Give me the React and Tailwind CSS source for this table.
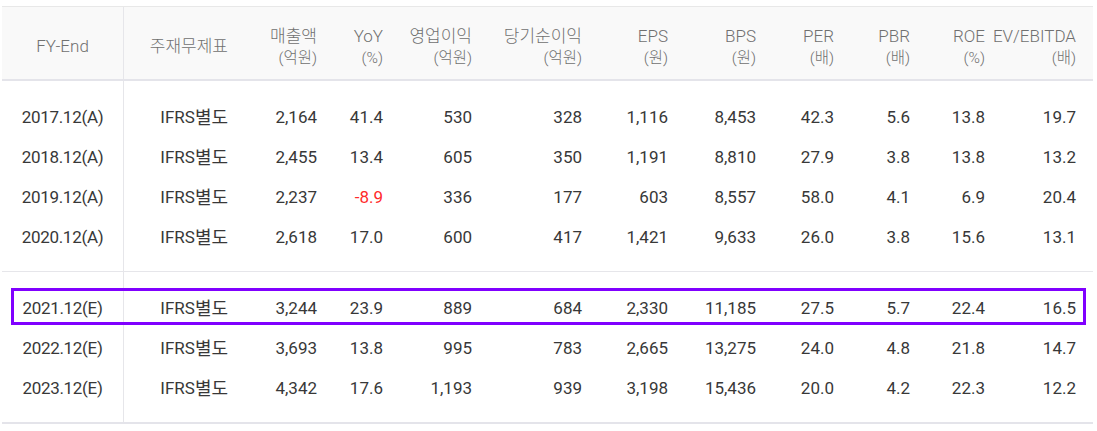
import React from "react";

const COLS =
  "grid grid-cols-[122px_121px_89px_66px_89px_110px_86px_88px_78px_76px_75px_91px]";

const headers = [
  ["매출액", "(억원)"],
  ["YoY", "(%)"],
  ["영업이익", "(억원)"],
  ["당기순이익", "(억원)"],
  ["EPS", "(원)"],
  ["BPS", "(원)"],
  ["PER", "(배)"],
  ["PBR", "(배)"],
  ["ROE", "(%)"],
  ["EV/EBITDA", "(배)"],
];

const actual = [
  ["2017.12(A)", "2,164", "41.4", "530", "328", "1,116", "8,453", "42.3", "5.6", "13.8", "19.7"],
  ["2018.12(A)", "2,455", "13.4", "605", "350", "1,191", "8,810", "27.9", "3.8", "13.8", "13.2"],
  ["2019.12(A)", "2,237", "-8.9", "336", "177", "603", "8,557", "58.0", "4.1", "6.9", "20.4"],
  ["2020.12(A)", "2,618", "17.0", "600", "417", "1,421", "9,633", "26.0", "3.8", "15.6", "13.1"],
];

const estimate = [
  ["2021.12(E)", "3,244", "23.9", "889", "684", "2,330", "11,185", "27.5", "5.7", "22.4", "16.5"],
  ["2022.12(E)", "3,693", "13.8", "995", "783", "2,665", "13,275", "24.0", "4.8", "21.8", "14.7"],
  ["2023.12(E)", "4,342", "17.6", "1,193", "939", "3,198", "15,436", "20.0", "4.2", "22.3", "12.2"],
];

function Spacer() {
  return (
    <div className={`${COLS} h-[15px]`}>
      <div className="border-r border-[#e6e6ea]" />
      <div className="col-span-11" />
    </div>
  );
}

function Row({ r, highlight }) {
  return (
    <div className={`${COLS} relative h-[40px] text-[17px] text-[#383838]`}>
      <div className="flex items-center justify-center border-r border-[#e6e6ea] pt-[3px] tracking-[-0.3px]">
        {r[0]}
      </div>
      <div className="flex items-center justify-end pr-[17px] pt-[3px]">
        IFRS<span className="text-[18px]">별도</span>
      </div>
      {r.slice(1).map((v, i) => (
        <div
          key={i}
          className={`flex items-center justify-end pr-[17px] pt-[3px] ${
            v.startsWith("-") ? "text-[#ff2b2b]" : ""
          }`}
        >
          {v}
        </div>
      ))}
      {highlight && (
        <div className="pointer-events-none absolute left-[9px] right-[7px] top-[1px] bottom-[2px] border-[3px] border-[#8000ff]" />
      )}
    </div>
  );
}

export default function App() {
  return (
    <div
      className="ml-[2px] mt-[6px] w-[1091px] bg-white"
      style={{ fontFamily: 'Roboto, "Noto Sans CJK KR", sans-serif' }}
    >
      <div
        className={`${COLS} border-t border-[#e8e8e8] border-b-2 border-b-[#e4e4ea] bg-[#f9f9f9] text-[17px] font-light text-[#707070]`}
      >
        <div className="flex h-[72px] items-center justify-center border-r border-[#e6e6ea] pt-[7px]">
          FY-End
        </div>
        <div className="flex h-[72px] items-center justify-end pr-[17px] pt-[7px]">
          주재무제표
        </div>
        {headers.map(([a, b]) => (
          <div
            key={a}
            className="flex h-[72px] flex-col items-end justify-center pr-[17px] pt-[7px] leading-[22px]"
          >
            <span>{a}</span>
            <span className="text-[15.5px]">{b}</span>
          </div>
        ))}
      </div>
      <Spacer />
      {actual.map((r) => (
        <Row key={r[0]} r={r} />
      ))}
      <Spacer />
      <div className="border-t border-[#e6e6ea]">
        <Spacer />
        {estimate.map((r, i) => (
          <Row key={r[0]} r={r} highlight={i === 0} />
        ))}
        <Spacer />
      </div>
      <div className="border-t-2 border-[#e4e4ea]" />
    </div>
  );
}
